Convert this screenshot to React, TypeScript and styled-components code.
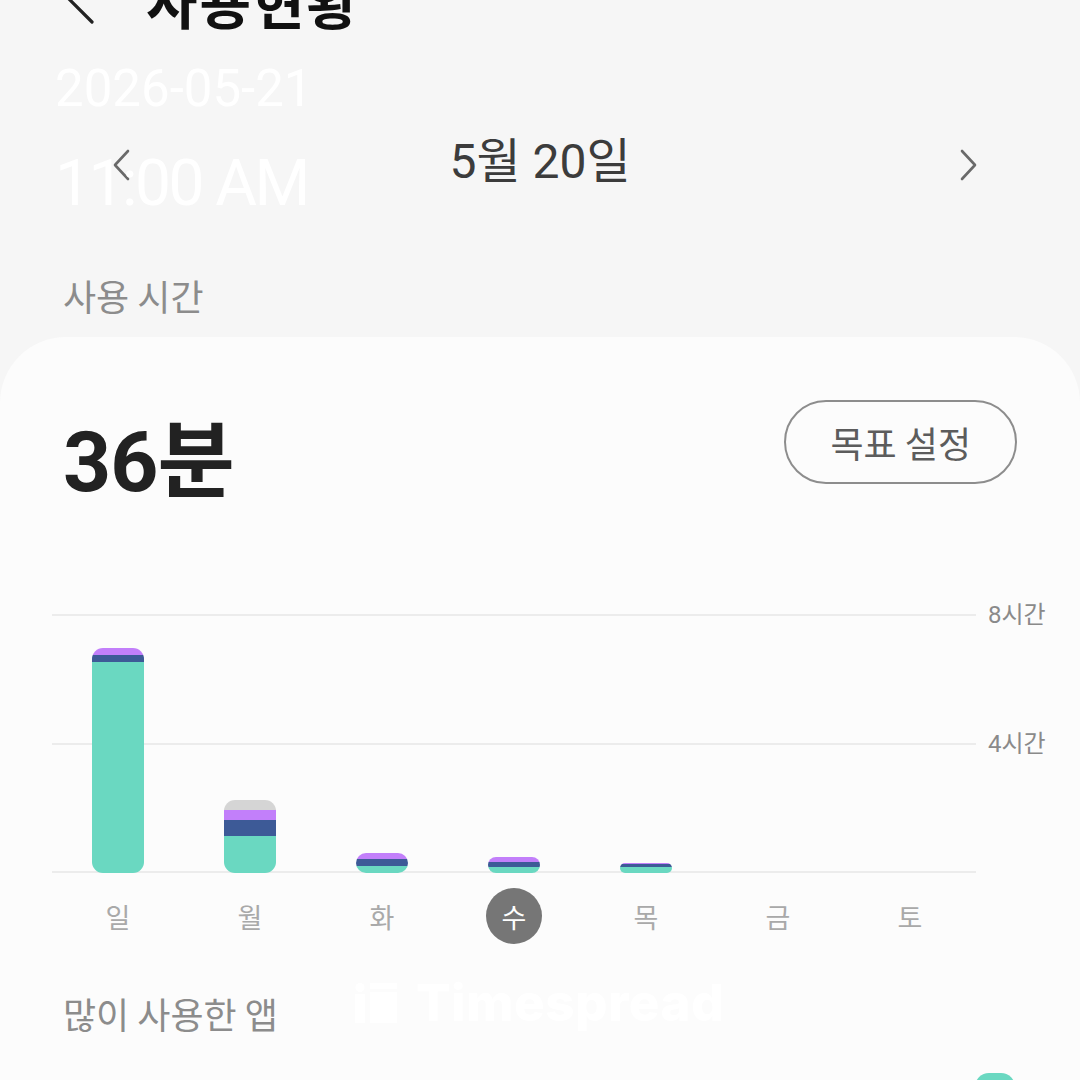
import React from "react";
import styled, { createGlobalStyle } from "styled-components";

const GlobalStyle = createGlobalStyle`
  html, body { margin: 0; padding: 0; background: #f6f6f6; }
  body { font-family: Roboto, "Noto Sans CJK KR", sans-serif; }
`;

const KR = `"Noto Sans CJK KR", sans-serif`;
const MIX = `Roboto, "Noto Sans CJK KR", sans-serif`;

const Screen = styled.div`
  position: relative;
  width: 1080px;
  height: 1080px;
  overflow: hidden;
  background: #f6f6f6;
  display: flex;
  flex-direction: column;
  & > * {
    flex-shrink: 0;
  }
`;

const Header = styled.header`
  display: flex;
  align-items: flex-end;
  height: 28px;
  padding-left: 64px;
  gap: 50px;
`;

const BackIcon = styled.svg`
  flex: none;
  margin-bottom: 2px;
`;

const Title = styled.h1`
  margin: 0;
  font-family: ${KR};
  font-size: 56px;
  line-height: 56px;
  font-weight: 700;
  letter-spacing: 2px;
  color: #111;
`;

const DateNav = styled.nav`
  margin-top: 97px;
  height: 80px;
  display: grid;
  grid-template-columns: 1fr auto 1fr;
  align-items: center;
`;

const NavButton = styled.div<{ $side: "left" | "right" }>`
  display: flex;
  justify-content: ${(p) => (p.$side === "left" ? "flex-start" : "flex-end")};
  padding-left: ${(p) => (p.$side === "left" ? "112px" : "0")};
  padding-right: ${(p) => (p.$side === "right" ? "102px" : "0")};
`;

const DateText = styled.div`
  font-family: ${MIX};
  font-size: 48px;
  line-height: 56px;
  margin-top: -6px;
  color: #3c3c3c;
`;

const SectionLabel = styled.div<{ $top: number }>`
  margin-top: ${(p) => p.$top}px;
  padding-left: 63px;
  font-family: ${KR};
  font-size: 36px;
  line-height: 40px;
  color: #8c8c8c;
`;

const Card = styled.section`
  margin-top: 22px;
  flex: 1 0 auto;
  background: #fcfcfc;
  border-radius: 66px 66px 0 0;
  display: flex;
  flex-direction: column;
`;

const CardHeader = styled.div`
  padding: 63px 63px 0 63px;
  display: flex;
  justify-content: space-between;
  align-items: flex-start;
`;

const BigNumber = styled.div`
  margin-top: 21px;
  font-family: ${MIX};
  font-size: 84px;
  line-height: 84px;
  font-weight: 700;
  color: #222;
  letter-spacing: -1px;
`;

const GoalButton = styled.button`
  height: 84px;
  padding: 0 44px;
  border: 2px solid #8d8d8d;
  border-radius: 42px;
  background: transparent;
  font-family: ${KR};
  font-size: 36px;
  color: #5c5c5c;
`;

const Chart = styled.div`
  margin-top: 109px;
  padding-left: 52px;
  display: flex;
`;

const Plot = styled.div`
  width: 924px;
  display: grid;
`;

const GridLayer = styled.div`
  grid-area: 1 / 1;
  height: 259px;
  display: flex;
  flex-direction: column;
  justify-content: space-between;
`;

const GridLine = styled.div`
  height: 2px;
  background: #ececec;
`;

const BarsLayer = styled.div`
  grid-area: 1 / 1;
  display: grid;
  grid-template-columns: repeat(7, 132px);
  align-items: end;
`;

const BarSlot = styled.div`
  display: flex;
  justify-content: center;
  align-items: flex-end;
`;

const Bar = styled.div`
  width: 52px;
  border-radius: 11px;
  overflow: hidden;
  display: flex;
  flex-direction: column;
`;

const Segment = styled.div<{ $color: string; $h: number }>`
  height: ${(p) => p.$h}px;
  background: ${(p) => p.$color};
`;

const AxisCol = styled.div`
  margin-left: 12px;
  height: 259px;
  display: flex;
  flex-direction: column;
  justify-content: space-between;
`;

const Tick = styled.div`
  height: 2px;
  display: flex;
  align-items: center;
`;

const TickLabel = styled.span`
  font-family: ${MIX};
  font-size: 24px;
  line-height: 26px;
  color: #8a8a8a;
  white-space: nowrap;
`;

const DayRow = styled.div`
  margin-top: 15px;
  padding-left: 52px;
  display: grid;
  grid-template-columns: repeat(7, 132px);
  height: 56px;
`;

const DayCell = styled.div`
  display: flex;
  justify-content: center;
  align-items: center;
`;

const DayLabel = styled.div<{ $active?: boolean }>`
  width: 56px;
  height: 56px;
  border-radius: 50%;
  display: flex;
  justify-content: center;
  align-items: center;
  font-family: ${KR};
  font-size: 27px;
  color: ${(p) => (p.$active ? "#ffffff" : "#a9a9a9")};
  background: ${(p) => (p.$active ? "#767676" : "transparent")};
`;

const AppRow = styled.div`
  margin-top: 40px;
  padding-right: 65px;
  display: flex;
  justify-content: flex-end;
`;

const AppIcon = styled.div`
  width: 40px;
  height: 40px;
  border-radius: 14px;
  background: #6ad8c1;
`;

const Stamp = styled.div`
  position: absolute;
  left: 55px;
  top: 63px;
  display: flex;
  flex-direction: column;
  gap: 38px;
  color: #ffffff;
  font-family: Roboto, sans-serif;
  pointer-events: none;
`;

const StampDate = styled.div`
  font-size: 51px;
  line-height: 51px;
`;

const StampTime = styled.div`
  font-size: 64px;
  line-height: 64px;
  letter-spacing: -2.5px;
`;

const Watermark = styled.div`
  position: absolute;
  left: 355px;
  top: 975px;
  display: flex;
  align-items: center;
  gap: 19px;
  color: #ffffff;
  pointer-events: none;
`;

const WatermarkText = styled.span`
  font-family: Inter, sans-serif;
  font-weight: 800;
  font-size: 51px;
  line-height: 56px;
  letter-spacing: 0.6px;
`;

const TEAL = "#6ad8c1";
const NAVY = "#3d5a97";
const PURPLE = "#c27ffa";
const GRAY = "#d5d5d5";

type Seg = { color: string; h: number };
const bars: Seg[][] = [
  [
    { color: PURPLE, h: 7 },
    { color: NAVY, h: 7 },
    { color: TEAL, h: 211 },
  ],
  [
    { color: GRAY, h: 10 },
    { color: PURPLE, h: 10 },
    { color: NAVY, h: 16 },
    { color: TEAL, h: 37 },
  ],
  [
    { color: PURPLE, h: 6 },
    { color: NAVY, h: 7 },
    { color: TEAL, h: 7 },
  ],
  [
    { color: PURPLE, h: 5 },
    { color: NAVY, h: 5 },
    { color: TEAL, h: 6 },
  ],
  [
    { color: PURPLE, h: 1 },
    { color: NAVY, h: 3 },
    { color: TEAL, h: 6 },
  ],
  [],
  [],
];

const days = ["일", "월", "화", "수", "목", "금", "토"];

const Chevron = ({ dir }: { dir: "left" | "right" }) => (
  <svg width="18" height="32" viewBox="0 0 18 32" fill="none">
    <path
      d={dir === "left" ? "M16 2 L3 16 L16 30" : "M2 2 L15 16 L2 30"}
      stroke="#6a6a6a"
      strokeWidth="2.6"
      strokeLinecap="round"
      strokeLinejoin="round"
    />
  </svg>
);

export default function App() {
  return (
    <>
      <GlobalStyle />
      <Screen>
        <Header>
          <BackIcon width="32" height="56" viewBox="0 0 32 56" fill="none">
            <path
              d="M28 4 L4 28 L28 52"
              stroke="#222"
              strokeWidth="3.2"
              strokeLinecap="round"
              strokeLinejoin="round"
            />
          </BackIcon>
          <Title>사용현황</Title>
        </Header>

        <DateNav>
          <NavButton $side="left">
            <Chevron dir="left" />
          </NavButton>
          <DateText>5월 20일</DateText>
          <NavButton $side="right">
            <Chevron dir="right" />
          </NavButton>
        </DateNav>

        <SectionLabel $top={70}>사용 시간</SectionLabel>

        <Card>
          <CardHeader>
            <BigNumber>36분</BigNumber>
            <GoalButton>목표 설정</GoalButton>
          </CardHeader>

          <Chart>
            <Plot>
              <GridLayer>
                <GridLine />
                <GridLine />
                <GridLine />
              </GridLayer>
              <BarsLayer>
                {bars.map((segs, i) => (
                  <BarSlot key={i}>
                    {segs.length > 0 && (
                      <Bar>
                        {segs.map((s, j) => (
                          <Segment key={j} $color={s.color} $h={s.h} />
                        ))}
                      </Bar>
                    )}
                  </BarSlot>
                ))}
              </BarsLayer>
            </Plot>
            <AxisCol>
              <Tick>
                <TickLabel>8시간</TickLabel>
              </Tick>
              <Tick>
                <TickLabel>4시간</TickLabel>
              </Tick>
              <Tick />
            </AxisCol>
          </Chart>

          <DayRow>
            {days.map((d) => (
              <DayCell key={d}>
                <DayLabel $active={d === "수"}>{d}</DayLabel>
              </DayCell>
            ))}
          </DayRow>

          <SectionLabel $top={49}>많이 사용한 앱</SectionLabel>

          <AppRow>
            <AppIcon />
          </AppRow>
        </Card>

        <Stamp>
          <StampDate>2026-05-21</StampDate>
          <StampTime>11:00 AM</StampTime>
        </Stamp>

        <Watermark>
          <svg width="42" height="40" viewBox="0 0 42 40" fill="#ffffff">
            <circle cx="5" cy="4.5" r="4.5" />
            <rect x="0" y="11" width="10" height="29" />
            <rect x="15" y="0" width="27" height="6" />
            <rect x="15" y="9" width="27" height="31" />
          </svg>
          <WatermarkText>Timespread</WatermarkText>
        </Watermark>
      </Screen>
    </>
  );
}
